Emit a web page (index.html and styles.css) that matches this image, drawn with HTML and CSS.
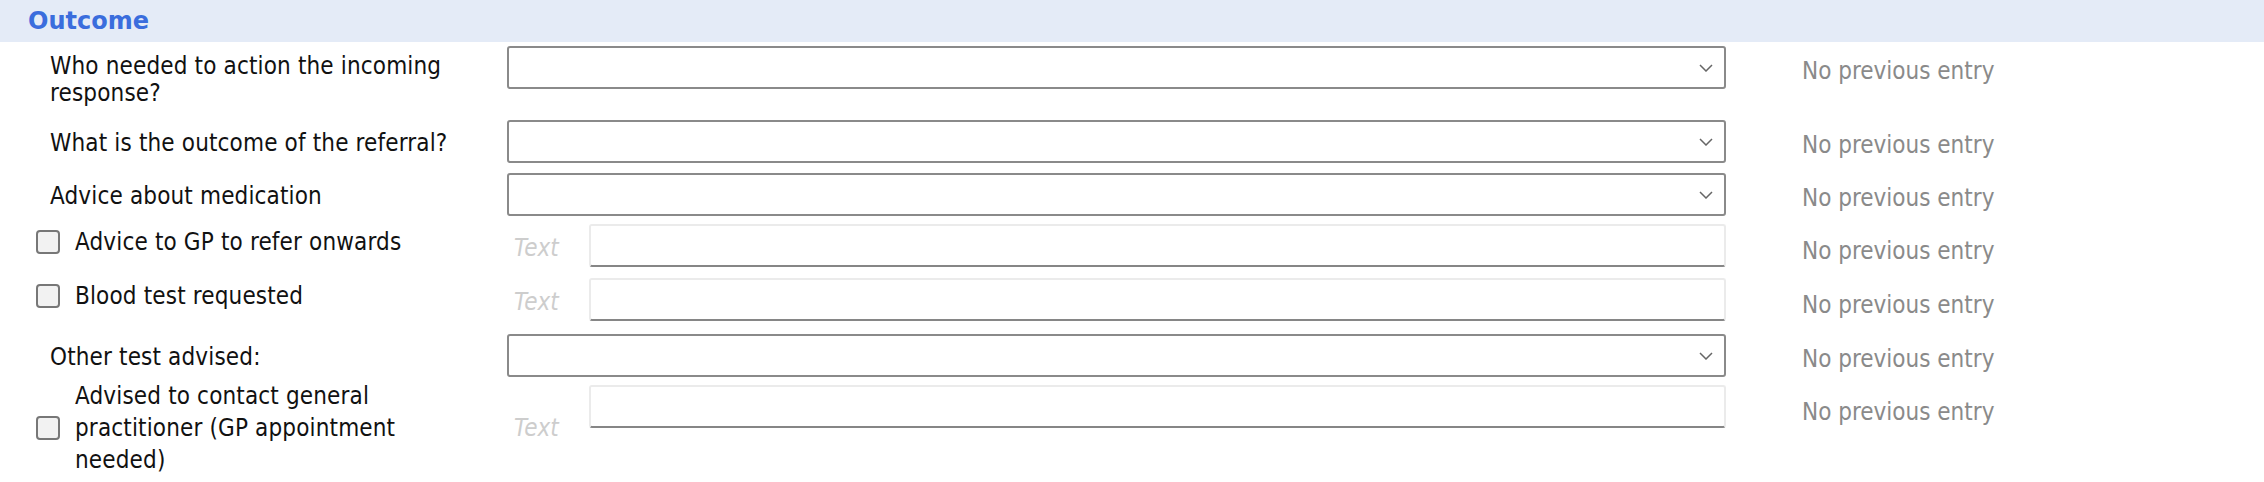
FILE: index.html
```html
<!DOCTYPE html>
<html>
<head>
<meta charset="utf-8">
<link rel="stylesheet" href="styles.css">
</head>
<body>
<div class="section">
  <div class="hdr"><span class="title">Outcome</span></div>

  <div class="row row-tall">
    <div class="lab"><span class="txt">Who needed to action the incoming response?</span></div>
    <div class="ctrl"><div class="select"><svg class="chev" width="14" height="8" viewBox="0 0 14 8"><path d="M1 1 L7 7 L13 1" /></svg></div></div>
    <div class="prev">No previous entry</div>
  </div>

  <div class="row row-sel">
    <div class="lab"><span class="txt">What is the outcome of the referral?</span></div>
    <div class="ctrl"><div class="select"><svg class="chev" width="14" height="8" viewBox="0 0 14 8"><path d="M1 1 L7 7 L13 1" /></svg></div></div>
    <div class="prev">No previous entry</div>
  </div>

  <div class="row row-short">
    <div class="lab"><span class="txt">Advice about medication</span></div>
    <div class="ctrl"><div class="select"><svg class="chev" width="14" height="8" viewBox="0 0 14 8"><path d="M1 1 L7 7 L13 1" /></svg></div></div>
    <div class="prev">No previous entry</div>
  </div>

  <div class="row row-inp">
    <div class="lab lab-chk"><span class="box"></span><span class="txt">Advice to GP to refer onwards</span></div>
    <div class="ctrl ctrl-inp"><span class="ph">Text</span><div class="input"></div></div>
    <div class="prev">No previous entry</div>
  </div>

  <div class="row row-inp">
    <div class="lab lab-chk"><span class="box"></span><span class="txt">Blood test requested</span></div>
    <div class="ctrl ctrl-inp"><span class="ph">Text</span><div class="input"></div></div>
    <div class="prev">No previous entry</div>
  </div>

  <div class="row row-short">
    <div class="lab"><span class="txt">Other test advised:</span></div>
    <div class="ctrl"><div class="select"><svg class="chev" width="14" height="8" viewBox="0 0 14 8"><path d="M1 1 L7 7 L13 1" /></svg></div></div>
    <div class="prev">No previous entry</div>
  </div>

  <div class="row row-inp">
    <div class="lab lab-chk lab-multi"><span class="box"></span><span class="txt">Advised to contact general practitioner (GP appointment needed)</span></div>
    <div class="ctrl ctrl-inp"><span class="ph">Text</span><div class="input"></div></div>
    <div class="prev">No previous entry</div>
  </div>
</div>
</body>
</html>
```

FILE: styles.css
```css
html, body {
  margin: 0;
  padding: 0;
  background: #ffffff;
}

body {
  font-family: "DejaVu Sans Condensed", "DejaVu Sans", sans-serif;
  font-size: 24px;
  color: #111111;
}

.hdr {
  height: 42px;
  background: #e4ebf7;
  display: flex;
  align-items: center;
  padding-left: 28px;
}

.title {
  font-family: "DejaVu Sans", sans-serif;
  font-weight: bold;
  font-size: 24px;
  color: #3a6ddd;
}

.row {
  display: flex;
  align-items: stretch;
}

.row-tall { min-height: 74px; }
.row-sel { min-height: 53px; }
.row-short { min-height: 52px; }
.row-inp { min-height: 54px; }

.lab {
  width: 485px;
  box-sizing: border-box;
  padding-left: 50px;
  padding-right: 5px;
  padding-top: 1px;
  display: flex;
  align-items: center;
  line-height: 27px;
  letter-spacing: 0.15px;
}

.lab-chk {
  align-self: flex-start;
  min-height: 40px;
  padding-left: 36px;
  padding-top: 4px;
  padding-bottom: 4px;
  gap: 15px;
}

.lab-multi {
  line-height: 32px;
  padding-top: 0;
  padding-bottom: 0;
  margin-top: -3px;
}

.box {
  flex: none;
  width: 24px;
  height: 24px;
  box-sizing: border-box;
  border: 2px solid #777777;
  border-radius: 4px;
  background: #f2f2f2;
}

.ctrl {
  margin-left: 22px;
  width: 1219px;
  display: flex;
  align-items: flex-start;
}

.ctrl-inp {
  padding-bottom: 6px;
}

.select {
  margin-top: 4px;
  width: 100%;
  height: 43px;
  box-sizing: border-box;
  border: 2px solid #8a8a8a;
  border-radius: 3px;
  background: #fff;
  display: flex;
  justify-content: flex-end;
  align-items: center;
  padding-right: 11px;
}

.chev path {
  fill: none;
  stroke: #666;
  stroke-width: 1.5;
}

.ph {
  align-self: center;
  width: 82px;
  flex: none;
  box-sizing: border-box;
  padding-left: 7px;
  padding-top: 3px;
  font-style: italic;
  color: #cdcdcd;
}

.input {
  margin-top: 2px;
  flex: 1;
  height: 43px;
  box-sizing: border-box;
  border: 2px solid #ebebeb;
  border-bottom-color: #868686;
  border-radius: 3px;
  background: #fff;
}

.prev {
  margin-left: 76px;
  align-self: flex-start;
  margin-top: 5px;
  height: 48px;
  display: flex;
  align-items: center;
  color: #8a8a8a;
  white-space: nowrap;
}
```
